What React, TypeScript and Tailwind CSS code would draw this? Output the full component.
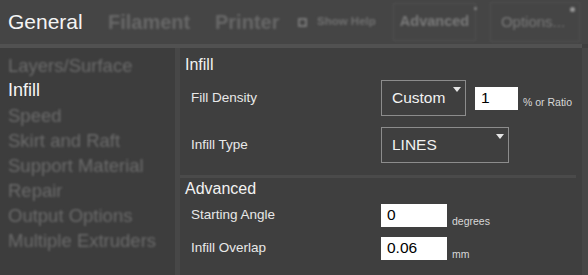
import React from 'react';

const FONT = { fontFamily: '"Liberation Sans", Arial, sans-serif' };

const SIDEBAR = [
  'Layers/Surface',
  'Infill',
  'Speed',
  'Skirt and Raft',
  'Support Material',
  'Repair',
  'Output Options',
  'Multiple Extruders',
];

function Caret() {
  return (
    <svg width="8" height="5" viewBox="0 0 8 5" className="absolute right-[4px] top-[6px]">
      <path d="M0 0 L8 0 L4 5 Z" fill="#e6e6e6" />
    </svg>
  );
}

function Select({ value, width }: { value: string; width: string }) {
  return (
    <div className={`relative h-[36px] ${width} border border-[#8c8c8c] flex items-center pl-[10px] text-[15.5px] text-[#f2f2f2]`}>
      {value}
      <Caret />
    </div>
  );
}

function NumInput({ value, width }: { value: string; width: string }) {
  return (
    <div className={`h-[23px] ${width} bg-white text-black text-[15.5px] leading-[22px] pl-[6px]`}>{value}</div>
  );
}

function Row({ label, h, children }: { label: string; h: string; children: React.ReactNode }) {
  return (
    <div className={`flex items-center ${h}`}>
      <div className="w-[201px] pl-[11px] text-[13.5px] text-[#e8e8e8]">{label}</div>
      {children}
    </div>
  );
}

function Unit({ text }: { text: string }) {
  return <div className="self-end text-[10.5px] text-[#d8d8d8] leading-none pl-[5px] pb-[1px]">{text}</div>;
}

export default function App() {
  return (
    <div style={FONT} className="w-[588px] h-[275px] bg-[#3f3f3f] overflow-hidden flex flex-col">
      {/* Tab bar */}
      <div className="h-[44px] bg-[#454545] flex items-center relative">
        <div className="pl-[8px] text-[21px] text-[#f4f4f4] w-[108px]">General</div>
        <div className="text-[20px] font-bold text-[#686868] blur-[1.2px] w-[107px]">Filament</div>
        <div className="text-[20px] font-bold text-[#686868] blur-[1.2px] w-[83px]">Printer</div>
        <div className="flex items-center gap-[10px] blur-[1px] w-[95px]">
          <div className="w-[9px] h-[9px] border-2 border-[#777]" />
          <span className="text-[11.5px] font-bold text-[#707070]">Show Help</span>
        </div>
        <div className="relative h-[38px] w-[83px] border border-[#505050] flex items-center justify-center blur-[1px]">
          <span className="text-[14.5px] font-bold text-[#7a7a7a]">Advanced</span>
          <div className="absolute right-[-2px] top-[3px] w-[3px] h-[3px] rounded-full bg-[#888]" />
        </div>
        <div className="ml-[14px] relative h-[40px] w-[90px] border border-[#505050] flex items-center justify-center blur-[1px]">
          <span className="text-[15px] text-[#7a7a7a] -ml-[4px]">Options...</span>
          <div className="absolute right-[4px] top-[4px] w-[5px] h-[5px] rounded-full bg-[#999]" />
        </div>
      </div>
      <div className="h-[4px] bg-[#515151] mr-[6px]" />

      <div className="flex flex-1">
        {/* Sidebar */}
        <div className="w-[175px] bg-[#3d3d3d] pt-[5px] flex flex-col">
          {SIDEBAR.map((s) =>
            s === 'Infill' ? (
              <div key={s} className="pl-[8px] text-[18px] leading-[25px] text-[#f4f4f4]">{s}</div>
            ) : (
              <div key={s} className="pl-[8px] text-[18.5px] leading-[25px] text-[#6b6b6b] blur-[1.2px]">{s}</div>
            )
          )}
        </div>
        <div className="w-[5px] bg-[#474747]" />

        {/* Settings */}
        <div className="flex-1 flex flex-col">
          <div className="pt-[7px] pb-[12px]">
            <div className="pl-[5px] text-[16px] leading-[20px] text-[#f2f2f2]">Infill</div>
            <div className="mt-[5px] flex flex-col gap-[11px]">
              <Row label="Fill Density" h="h-[36px]">
                <Select value="Custom" width="w-[85px]" />
                <div className="ml-[9px] flex items-center h-[23px]">
                  <NumInput value="1" width="w-[43px]" />
                </div>
                <div className="self-end text-[10.5px] text-[#d8d8d8] leading-none pl-[5px] pb-[9px]">% or Ratio</div>
              </Row>
              <Row label="Infill Type" h="h-[36px]">
                <Select value="LINES" width="w-[128px]" />
              </Row>
            </div>
          </div>
          <div className="h-[3px] bg-[#4a4a4a] mr-[6px]" />
          <div className="pt-[1px]">
            <div className="pl-[5px] text-[16px] leading-[20px] text-[#f2f2f2]">Advanced</div>
            <div className="mt-[5px] flex flex-col gap-[10px]">
              <Row label="Starting Angle" h="h-[23px]">
                <NumInput value="0" width="w-[66px]" />
                <Unit text="degrees" />
              </Row>
              <Row label="Infill Overlap" h="h-[23px]">
                <NumInput value="0.06" width="w-[66px]" />
                <Unit text="mm" />
              </Row>
            </div>
          </div>
        </div>
        <div className="w-[6px] bg-[#464646]" />
      </div>
    </div>
  );
}
